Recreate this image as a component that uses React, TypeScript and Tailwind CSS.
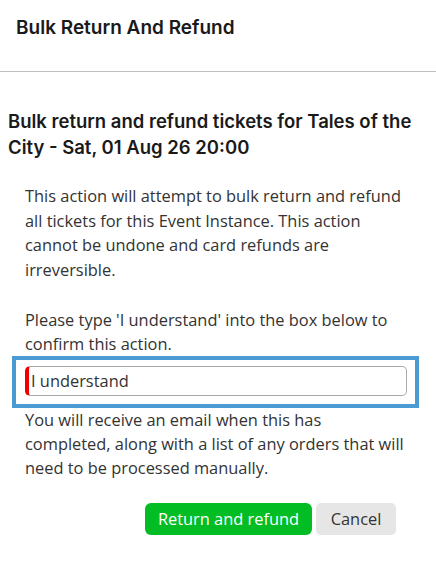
import React from "react";

export default function App() {
  return (
    <div className="w-[436px] h-[571px] bg-white text-[#1a1a1a]" style={{ fontFamily: "Inter, 'Noto Sans', sans-serif" }}>
      <div className="h-[72px] border-b border-[#bdbdbd] px-4 pt-4">
        <h1 className="text-[19px] leading-6 font-semibold">Bulk Return And Refund</h1>
      </div>
      <h2 className="mt-[36px] px-2 text-[18.5px] leading-[26px] font-semibold">
        Bulk return and refund tickets for Tales of the City - Sat, 01 Aug 26 20:00
      </h2>
      <div className="text-[16.4px] text-[#333]" style={{ fontFamily: "'Open Sans', sans-serif" }}>
        <p className="mt-[24px] px-[25px] leading-[24.7px] whitespace-nowrap">
          This action will attempt to bulk return and refund<br />
          all tickets for this Event Instance. This action<br />
          cannot be undone and card refunds are<br />
          irreversible.
        </p>
        <p className="mt-[25px] px-[25px] leading-[24px] whitespace-nowrap">
          Please type 'I understand' into the box below to<br />
          confirm this action.
        </p>
        <div className="mx-[12px] w-[407px] border-4 border-[#4a9bd1] pl-[9px] pr-[8px] pt-[6px] pb-[8px]">
          <div className="h-[30px] rounded-[5px] border border-[#a8a8a8] border-l-4 border-l-[#ee0000] flex items-center pl-[2px] text-[16.4px] text-[#333]">
            I understand
          </div>
        </div>
        <p className="px-[25px] leading-[24px] whitespace-nowrap">
          You will receive an email when this has<br />
          completed, along with a list of any orders that will<br />
          need to be processed manually.
        </p>
        <div className="mt-[23px] flex justify-end gap-[4px] pr-[40px]">
          <button className="h-[32px] w-[167px] rounded-[6px] bg-[#02bd24] text-white text-[16.4px]">Return and refund</button>
          <button className="h-[32px] w-[80px] rounded-[5px] bg-[#e6e6e6] text-[#333] text-[16.4px]">Cancel</button>
        </div>
      </div>
    </div>
  );
}
